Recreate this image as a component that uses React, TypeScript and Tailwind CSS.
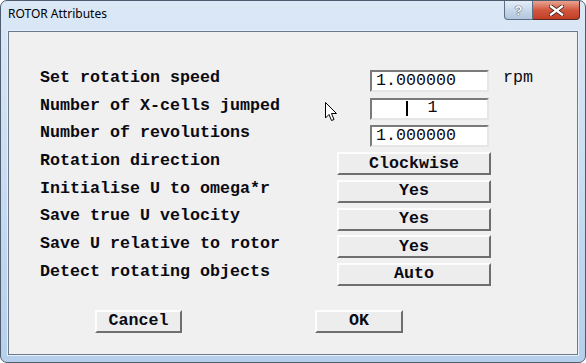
import React from "react";

const mono = { fontFamily: '"Liberation Mono", "Courier New", monospace' };

function Label({ children }: { children: React.ReactNode }) {
  return (
    <div className="w-[297px] pb-[5px] text-[16.67px] font-bold leading-none text-[#0a0a14]" style={mono}>
      {children}
    </div>
  );
}

function Field({ children }: { children: React.ReactNode }) {
  return (
    <div className="ml-[33px] flex h-[22px] w-[119px] items-center border-2 border-t-[#7a7a7a] border-l-[#7a7a7a] border-b-[#e6e6e6] border-r-[#e6e6e6] bg-white pl-[4px] text-[16.67px] leading-none text-[#0a0a14]" style={mono}>
      {children}
    </div>
  );
}

function Btn({ children, w = "w-[154px]" }: { children: React.ReactNode; w?: string }) {
  return (
    <div
      className={`flex h-[23px] ${w} items-center justify-center border-2 border-t-[#fdfdfd] border-l-[#fdfdfd] border-b-[#6e6e6e] border-r-[#6e6e6e] bg-[#ededed] text-[16.67px] font-bold leading-none text-[#0a0a14]`}
      style={mono}
    >
      {children}
    </div>
  );
}

function Row({ children }: { children: React.ReactNode }) {
  return <div className="flex h-[27.7px] items-center">{children}</div>;
}

export default function App() {
  return (
    <div className="relative h-[363px] w-[586px] overflow-hidden bg-white">
      <div className="flex h-full w-full flex-col rounded-[7px] border border-[#4d5c6e] bg-gradient-to-b from-[#dbe8f6] via-[#c9dcf1] to-[#b6cfeb]">
        {/* title bar */}
        <div className="flex h-[29px] items-start justify-between">
          <div className="pl-[7px] pt-[7px] text-[12px] leading-none text-black" style={{ fontFamily: '"Segoe UI", "Noto Sans", "Liberation Sans", sans-serif' }}>
            ROTOR Attributes
          </div>
          <div className="mr-[5px] flex">
            <div className="flex h-[19px] w-[29px] items-center justify-center rounded-bl-[4px] border border-t-0 border-[#5d6f85] bg-gradient-to-b from-[#e4edf7] via-[#c9d8ea] to-[#b3c6dc] text-[13px] font-bold leading-none text-white" style={{ fontFamily: '"Liberation Sans", sans-serif', textShadow: "0 0 1px #2a3a50, 0 0 1px #2a3a50" }}>
              ?
            </div>
            <div className="flex h-[19px] w-[47px] items-center justify-center rounded-br-[4px] border border-l-0 border-t-0 border-[#5a2a22] bg-gradient-to-b from-[#e8a493] via-[#d2573f] to-[#c13e27]">
              <svg width="15" height="11" viewBox="0 0 15 11">
                <path d="M2 1.5 L13 9.5 M13 1.5 L2 9.5" stroke="#3b1d18" strokeWidth="4" strokeLinecap="square" />
                <path d="M2 1.5 L13 9.5 M13 1.5 L2 9.5" stroke="#ffffff" strokeWidth="2.4" strokeLinecap="square" />
              </svg>
            </div>
          </div>
        </div>
        {/* content */}
        <div className="mx-[6px] mb-[6px] flex-1 border border-[#e6f0fb]">
          <div className="h-full border border-[#6c7a8b] bg-[#f0f0f0] pl-[31px] pt-[35px]">
            <Row>
              <Label>Set rotation speed</Label>
              <Field>1.000000</Field>
              <div className="ml-[14px] pb-[5px] text-[16.67px] leading-none text-[#0a0a14]" style={mono}>rpm</div>
            </Row>
            <Row>
              <Label>Number of X-cells jumped</Label>
              <Field>
                <span className="ml-[30px] inline-block h-[15px] w-[1.5px] bg-black" />
                <span className="ml-[20px]">1</span>
              </Field>
            </Row>
            <Row>
              <Label>Number of revolutions</Label>
              <Field>1.000000</Field>
            </Row>
            <Row>
              <Label>Rotation direction</Label>
              <Btn>Clockwise</Btn>
            </Row>
            <Row>
              <Label>Initialise U to omega*r</Label>
              <Btn>Yes</Btn>
            </Row>
            <Row>
              <Label>Save true U velocity</Label>
              <Btn>Yes</Btn>
            </Row>
            <Row>
              <Label>Save U relative to rotor</Label>
              <Btn>Yes</Btn>
            </Row>
            <Row>
              <Label>Detect rotating objects</Label>
              <Btn>Auto</Btn>
            </Row>
            <div className="mt-[21px] flex pl-[55px]">
              <Btn w="w-[87px]">Cancel</Btn>
              <div className="ml-[133px]">
                <Btn w="w-[88px]">OK</Btn>
              </div>
            </div>
          </div>
        </div>
      </div>
      {/* mouse cursor */}
      <svg className="absolute left-[325px] top-[102px]" width="13" height="20" viewBox="0 0 13 20">
        <path d="M0.5 0.5 L0.5 16 L4 12.5 L6.5 18.5 L9 17.5 L6.5 11.5 L11.5 11.5 Z" fill="#ffffff" stroke="#000000" strokeWidth="1" />
      </svg>
    </div>
  );
}
